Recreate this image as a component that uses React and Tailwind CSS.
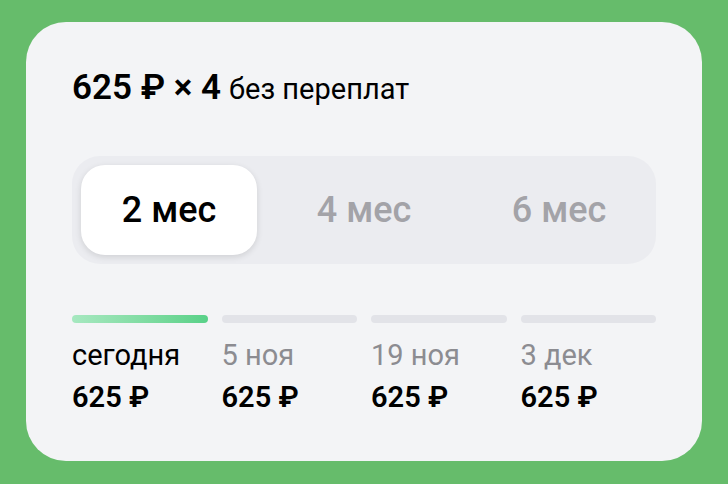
import React, { useState } from 'react';

const font = { fontFamily: 'Roboto, "Noto Sans", sans-serif' };

const periods = ['2 мес', '4 мес', '6 мес'];

const schedule = [
  { date: 'сегодня', amount: '625 ₽', active: true },
  { date: '5 ноя', amount: '625 ₽' },
  { date: '19 ноя', amount: '625 ₽' },
  { date: '3 дек', amount: '625 ₽' }
];

const App = () => {
  const [period, setPeriod] = useState(0);

  return (
    <div className="w-[728px] h-[484px] bg-[#66bc6b] pt-[22px] px-[26px]" style={font}>
      <div className="h-[439px] bg-[#f3f4f6] rounded-[40px] px-[46px] pt-[46px]">
        {/* Header */}
        <div className="flex items-baseline text-black">
          <span className="text-[35px] leading-[40px] font-semibold">625 ₽ × 4</span>
          <span className="ml-[8px] text-[29px] leading-[40px]">без переплат</span>
        </div>

        {/* Period switch */}
        <div className="mt-[47px] bg-[#ebecf0] rounded-[28px] p-[9px] flex gap-[19px]">
          {periods.map((p, i) => (
            <button
              key={p}
              onClick={() => setPeriod(i)}
              className={
                i === period
                  ? 'w-[176px] h-[90px] rounded-[24px] bg-white shadow-[0_2px_6px_rgba(0,0,0,0.12)] text-[36px] font-medium text-black'
                  : 'w-[176px] h-[90px] rounded-[24px] text-[36px] font-medium text-[#a3a3a8]'
              }
            >
              {p}
            </button>
          ))}
        </div>

        {/* Schedule */}
        <div className="mt-[51px] grid grid-cols-4 gap-[14px]">
          {schedule.map((s, i) => (
            <div key={i}>
              <div
                className={
                  s.active
                    ? 'h-[8px] rounded-full bg-gradient-to-r from-[#a6e8c0] to-[#58d188]'
                    : 'h-[8px] rounded-full bg-[#e2e3e8]'
                }
              />
              <div className={s.active ? 'mt-[16px] text-[29px] leading-[32px] text-black' : 'mt-[16px] text-[29px] leading-[32px] text-[#8c8c91]'}>
                {s.date}
              </div>
              <div className="mt-[10px] text-[29px] leading-[32px] font-semibold text-black">{s.amount}</div>
            </div>
          ))}
        </div>
      </div>
    </div>
  );
};

export default App;
